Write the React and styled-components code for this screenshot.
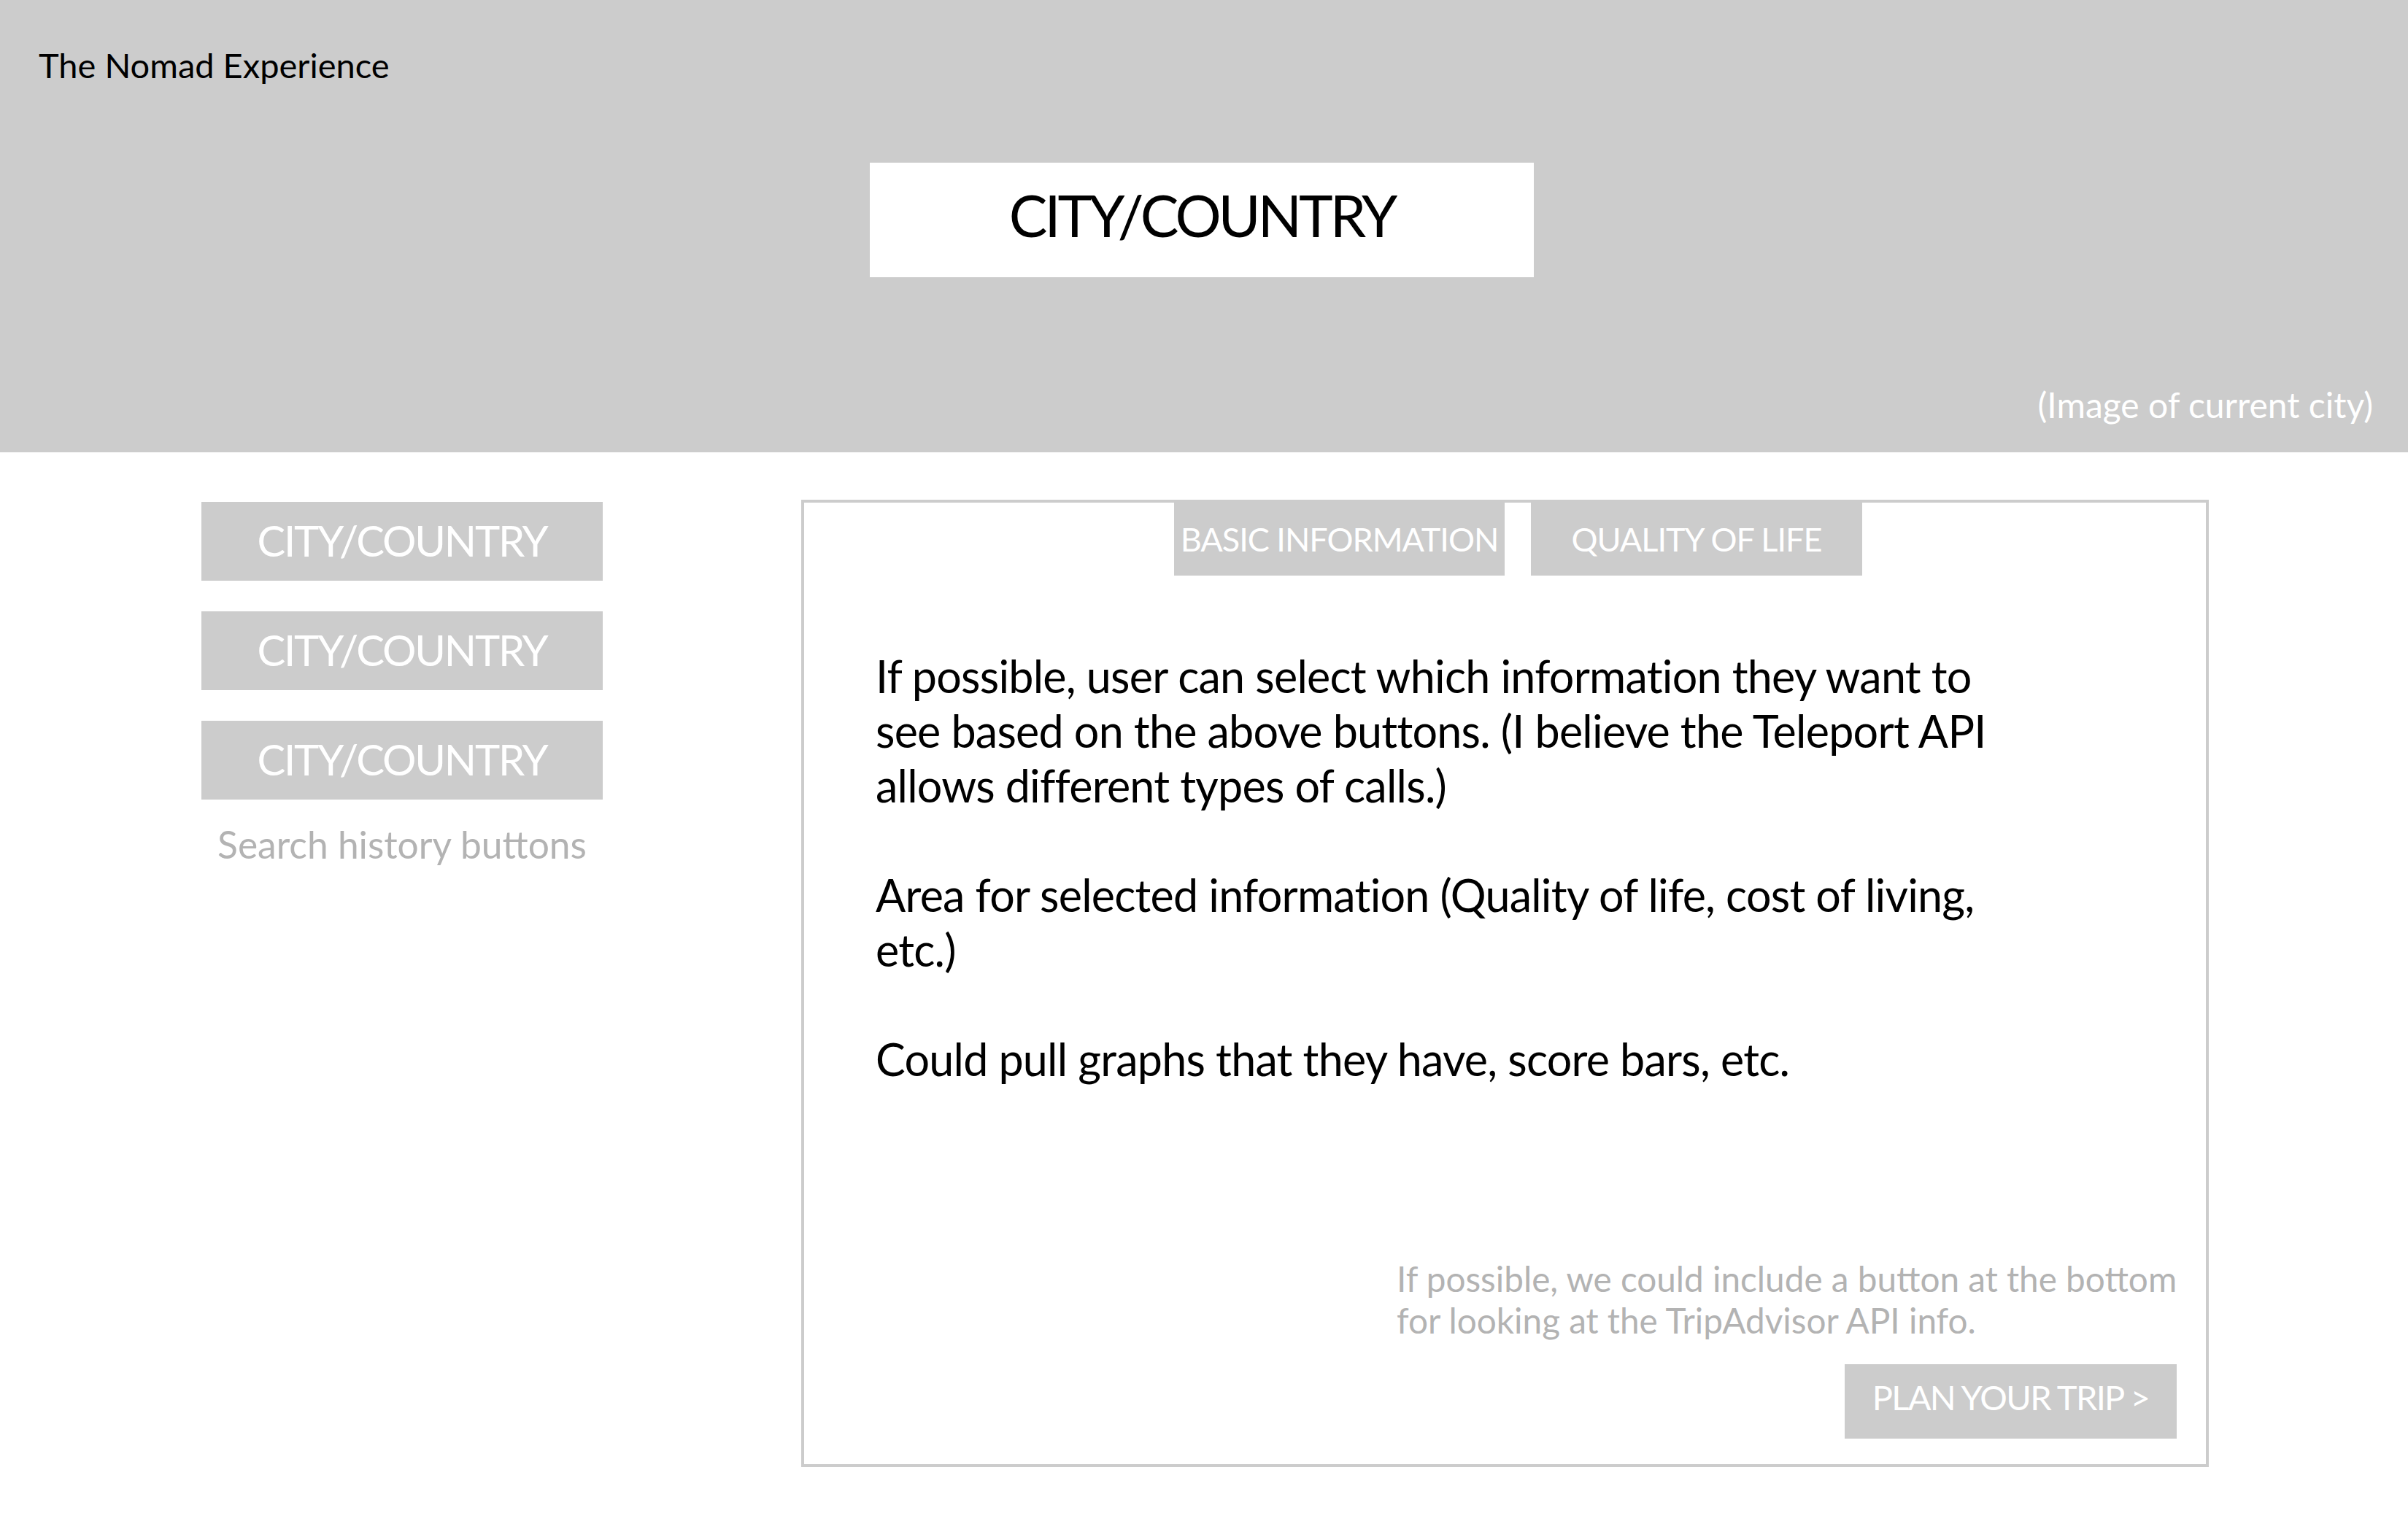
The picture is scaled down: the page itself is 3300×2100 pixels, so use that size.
import React from 'react'
import styled, { createGlobalStyle } from 'styled-components'

const GlobalStyle = createGlobalStyle`
  html, body {
    margin: 0;
    padding: 0;
    background: #ffffff;
  }
  body {
    font-family: Lato, "Open Sans", sans-serif;
  }
`

const Page = styled.div`
  width: 3300px;
  height: 2100px;
  overflow: hidden;
  background: #ffffff;
`

const Header = styled.header`
  height: 620px;
  box-sizing: border-box;
  background: #cccccc;
  display: flex;
  flex-direction: column;
  padding: 65px 48px 42px 53px;
`

const Brand = styled.h1`
  margin: 0;
  font-size: 47px;
  line-height: 48px;
  font-weight: 400;
  color: #000000;
`

const CityBox = styled.div`
  align-self: flex-start;
  margin: 110px 0 0 1139px;
  width: 910px;
  height: 157px;
  box-sizing: border-box;
  padding-bottom: 14px;
  background: #ffffff;
  display: flex;
  align-items: center;
  justify-content: center;
  font-size: 79px;
  line-height: 1;
  letter-spacing: -4px;
  color: #000000;
`

const Caption = styled.span`
  margin-top: auto;
  align-self: flex-end;
  font-size: 48px;
  line-height: 46px;
  color: #ffffff;
`

const Main = styled.main`
  display: flex;
  align-items: flex-start;
  padding: 65px 0 0 276px;
`

const Sidebar = styled.aside`
  width: 550px;
  margin-top: 3px;
  display: flex;
  flex-direction: column;
  gap: 42px;
`

const HistoryButton = styled.button`
  height: 108px;
  border: none;
  padding: 0 0 2px;
  background: #cccccc;
  color: #ffffff;
  font-family: Lato, "Open Sans", sans-serif;
  font-size: 58px;
  line-height: 1;
  letter-spacing: -2.2px;
  cursor: pointer;
`

const HistoryNote = styled.p`
  margin: -6px 0 0;
  text-align: center;
  font-size: 51.5px;
  line-height: 50px;
  color: #b3b3b3;
`

const Panel = styled.section`
  margin-left: 272px;
  width: 1929px;
  height: 1326px;
  box-sizing: border-box;
  border: 4px solid #cccccc;
  display: flex;
  flex-direction: column;
  padding: 0 40px 35px 98px;
`

const Tabs = styled.nav`
  display: flex;
  gap: 36px;
  margin-left: 409px;
`

const Tab = styled.button`
  width: ${(p) => p.$w}px;
  height: 100px;
  border: none;
  padding: 0;
  background: #cccccc;
  color: #ffffff;
  font-family: Lato, "Open Sans", sans-serif;
  font-size: 45px;
  line-height: 1;
  letter-spacing: -1px;
  white-space: nowrap;
  cursor: pointer;
`

const Body = styled.div`
  margin-top: 100px;
  font-size: 61px;
  line-height: 75px;
  letter-spacing: -0.75px;
  color: #000000;
`

const Para = styled.p`
  margin: 0 0 75px;
  white-space: nowrap;
`

const Footer = styled.div`
  margin-top: auto;
  align-self: flex-end;
  width: 1069px;
  display: flex;
  flex-direction: column;
`

const Note = styled.p`
  margin: 0;
  font-size: 47.7px;
  line-height: 57px;
  color: #b3b3b3;
  white-space: nowrap;
`

const PlanButton = styled.button`
  align-self: flex-end;
  margin-top: 32px;
  width: 455px;
  height: 102px;
  box-sizing: border-box;
  padding: 0 0 12px;
  border: none;
  background: #cccccc;
  color: #ffffff;
  font-family: Lato, "Open Sans", sans-serif;
  font-size: 47px;
  line-height: 1;
  letter-spacing: -1.7px;
  cursor: pointer;
`

const history = ['CITY/COUNTRY', 'CITY/COUNTRY', 'CITY/COUNTRY']

export default function App() {
  return (
    <Page>
      <GlobalStyle />
      <Header>
        <Brand>The Nomad Experience</Brand>
        <CityBox>CITY/COUNTRY</CityBox>
        <Caption>(Image of current city)</Caption>
      </Header>
      <Main>
        <Sidebar>
          {history.map((c, i) => (
            <HistoryButton key={i}>{c}</HistoryButton>
          ))}
          <HistoryNote>Search history buttons</HistoryNote>
        </Sidebar>
        <Panel>
          <Tabs>
            <Tab $w={453}>BASIC INFORMATION</Tab>
            <Tab $w={454}>QUALITY OF LIFE</Tab>
          </Tabs>
          <Body>
            <Para>
              If possible, user can select which information they want to
              <br />
              see based on the above buttons. (I believe the Teleport API
              <br />
              allows different types of calls.)
            </Para>
            <Para>
              Area for selected information (Quality of life, cost of living,
              <br />
              etc.)
            </Para>
            <Para>Could pull graphs that they have, score bars, etc.</Para>
          </Body>
          <Footer>
            <Note>
              If possible, we could include a button at the bottom
              <br />
              for looking at the TripAdvisor API info.
            </Note>
            <PlanButton>PLAN YOUR TRIP &gt;</PlanButton>
          </Footer>
        </Panel>
      </Main>
    </Page>
  )
}
